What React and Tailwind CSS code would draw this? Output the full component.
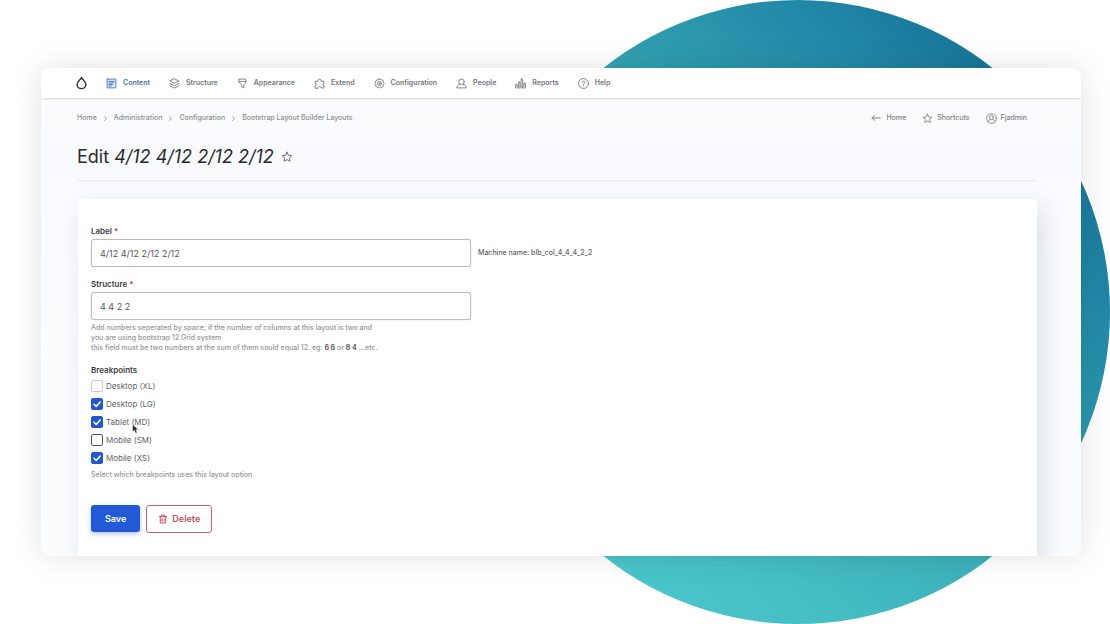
import React from "react";

const stroke = {
  fill: "none",
  stroke: "currentColor",
  strokeWidth: 1.6,
  strokeLinecap: "round",
  strokeLinejoin: "round",
};

function Icon({ children, className = "size-3" }) {
  return (
    <svg viewBox="0 0 20 20" className={`shrink-0 ${className}`} aria-hidden="true" {...stroke}>
      {children}
    </svg>
  );
}

const STAR = "M10 2l2.400 5.100 5.600.7-4.100 3.800 1.100 5.500-5-2.700-5 2.700 1.100-5.500L2 7.800l5.600-.7z";

const icons = {
  content: (
    <>
      <rect x="2" y="2" width="16" height="16" rx="0.5" fill="#dbe8f7" />
      <path d="M5.500 6.200h9M5.500 9h9M5.500 11.800h6M5.500 14.500h4" />
    </>
  ),
  structure: (
    <>
      <path d="M10 1.500l8 4-8 4-8-4z" />
      <path d="M2 10l8 4 8-4" />
      <path d="M2 14.300l8 4 8-4" />
    </>
  ),
  appearance: (
    <>
      <path d="M4 2h12v6.500L12.500 12v6l-4-2v-4L4 8.500z" />
      <path d="M4 6.500h12" />
    </>
  ),
  extend: (
    <path d="M2 18v-4.500c3.600.5 3.600-4.100 0-3.600V6h5.200C5.600.6 14.400.6 12.800 6H18v3.900c-3.600-.5-3.600 4.100 0 3.600V18h-5.300c.3-3.900-5.700-3.900-5.400 0z" />
  ),
  configuration: (
    <>
      <path d="M10 1.500l1.600 1.700 2.300-.6.9 2.200 2.400.7-.3 2.300 1.700 2.200-1.700 2.200.3 2.300-2.400.7-.9 2.200-2.300-.6L10 18.500l-1.600-1.700-2.300.6-.9-2.200-2.400-.7.3-2.300L1.400 10l1.700-2.200-.3-2.300 2.400-.7.9-2.200 2.300.6z" />
      <circle cx="10" cy="10" r="3.600" />
      <circle cx="10" cy="10" r="0.800" />
    </>
  ),
  people: (
    <>
      <circle cx="10" cy="6.800" r="5" />
      <path d="M6.800 11.500c-3 .8-5 2.800-5.300 6.500h17c-.3-3.700-2.300-5.700-5.300-6.500" />
    </>
  ),
  reports: (
    <>
      <rect x="1" y="12" width="3" height="6.500" rx="1" />
      <rect x="6" y="7.500" width="3" height="11" rx="1" />
      <rect x="11" y="2" width="3" height="16.500" rx="1" />
      <rect x="16" y="9.500" width="3" height="9" rx="1" />
    </>
  ),
  help: (
    <>
      <circle cx="10" cy="10" r="9" />
      <path d="M7.400 8c0-3.600 5.400-3.400 5.200-.2-.1 1.900-2.600 2-2.600 4.200M10 14.400v.2" />
    </>
  ),
};

const nav = [
  ["content", "Content"],
  ["structure", "Structure"],
  ["appearance", "Appearance"],
  ["extend", "Extend"],
  ["configuration", "Configuration"],
  ["people", "People"],
  ["reports", "Reports"],
  ["help", "Help"],
];

const crumbs = ["Home", "Administration", "Configuration", "Bootstrap Layout Builder Layouts"];

const breakpoints = [
  { id: "xl", label: "Desktop (XL)", box: "border-[#c9cace]" },
  { id: "lg", label: "Desktop (LG)", checked: true, box: "border-[#2158cf]" },
  { id: "md", label: "Tablet (MD)", checked: true, box: "border-[#2158cf]", pointer: true },
  { id: "sm", label: "Mobile (SM)", box: "border-[#55565b]" },
  { id: "xs", label: "Mobile (XS)", checked: true, box: "border-[#2158cf]" },
];

function Toolbar() {
  return (
    <nav
      aria-label="Administration"
      className="relative flex h-[30px] items-center gap-[19px] bg-white pl-[35px] text-[7px] font-semibold shadow-[0_1px_2px_rgba(0,0,0,0.14)]"
    >
      <a href="#" aria-label="Back to site" className="text-[#333439]">
        <svg viewBox="0 0 20 24" className="h-[14px] w-[11px]" aria-hidden="true" fill="none" stroke="currentColor" strokeWidth="2.600" strokeLinejoin="round">
          <path d="M10 2.200C8.500 5.500 2 9.500 2 14.600a8 7.600 0 0 0 16 0C18 9.500 11.500 5.500 10 2.200z" />
        </svg>
      </a>
      {nav.map(([key, label]) => (
        <a
          key={key}
          href="#"
          className={`flex items-center gap-1.5 ${key === "content" ? "text-[#3f74b4]" : "text-[#74757a]"}`}
        >
          <Icon className="size-[11px]">{icons[key]}</Icon>
          {label}
        </a>
      ))}
    </nav>
  );
}

function Field({ id, label, value, aside, children }) {
  return (
    <div>
      <label htmlFor={id} className="block text-[8px] leading-[15px] font-semibold text-[#3c3d42]">
        {label} <span className="text-[#c8324b]">*</span>
      </label>
      <div className="flex items-center gap-[7px]">
        <input
          id={id}
          type="text"
          defaultValue={value}
          className="h-7 w-full max-w-[380px] rounded-[3px] border border-[#bdbec2] bg-white px-2 text-[9px] text-[#55565b] shadow-[0_0_1px_rgba(0,0,0,0.3)] outline-none"
        />
        {aside}
      </div>
      {children}
    </div>
  );
}

export default function App() {
  return (
    <div className="relative isolate min-h-screen overflow-hidden bg-white pt-[68px] pr-[29px] pb-[68px] pl-[41px] font-['Inter',sans-serif]">
      <div className="absolute inset-y-0 right-0 -z-10 aspect-square rounded-full bg-[linear-gradient(225deg,#187799_15%,#2389a9_26%,#309fb0_42%,#3cafb9_54%,#46c0c5_75%,#4ac5c9_85%)]" />

      <div className="overflow-hidden rounded-[10px] bg-[linear-gradient(to_bottom,#fbfbfc_30px,#f8fafd_90px,#fafcfe_300px)] shadow-[0_0_32px_rgba(0,0,0,0.12)]">
        <Toolbar />

        <header className="pr-11 pl-9">
          <div className="flex h-10 items-center justify-between pr-2.5 text-[7px] font-medium text-[#8d8e93]">
            <nav aria-label="Breadcrumb" className="flex items-center gap-[7px]">
              {crumbs.map((crumb, i) => (
                <React.Fragment key={crumb}>
                  {i > 0 && (
                    <svg viewBox="0 0 6 10" className="h-[5px] w-[3px]" aria-hidden="true" {...stroke}>
                      <path d="M1 1l4 4-4 4" />
                    </svg>
                  )}
                  <a href="#">{crumb}</a>
                </React.Fragment>
              ))}
            </nav>
            <div className="flex items-center gap-4 text-[#808186]">
              <a href="#" className="flex items-center gap-[5px]">
                <Icon className="size-[10px]">
                  <path d="M18 10H2M7 5.500L2 10l5 4.500" strokeWidth="2" />
                </Icon>
                Home
              </a>
              <a href="#" className="flex items-center gap-1">
                <Icon className="size-[11px]">
                  <path d={STAR} />
                </Icon>
                Shortcuts
              </a>
              <a href="#" className="flex items-center gap-1">
                <Icon className="size-[11px]">
                  <circle cx="10" cy="10" r="8.800" />
                  <circle cx="10" cy="8" r="3.600" />
                  <path d="M4 16.200c.6-2.600 2-4 4-4.600M16 16.200c-.6-2.600-2-4-4-4.600" />
                </Icon>
                Fjadmin
              </a>
            </div>
          </div>
          <div className="flex h-11 items-center gap-[7px] border-b-2 border-[#f1f2f5] pb-1">
            <h1 className="text-[18px] leading-6 text-[#28292d]">
              Edit <em>4/12 4/12 2/12 2/12</em>
            </h1>
            <button type="button" aria-label="Add to shortcuts" className="text-[#6a6b70]">
              <Icon>
                <path d={STAR} />
              </Icon>
            </button>
          </div>
        </header>

        <main className="mt-[17px] mr-11 ml-[37px] bg-white px-[13px] pt-[25px] pb-[23px] shadow-[6px_10px_22px_rgba(45,65,85,0.14)]">
          <form onSubmit={(e) => e.preventDefault()}>
            <div className="flex flex-col gap-[10px]">
              <Field
                id="label"
                label="Label"
                value="4/12 4/12 2/12 2/12"
                aside={
                  <p className="text-[7px] font-medium whitespace-nowrap text-[#626368]">
                    Machine name: blb_col_4_4_4_2_2
                  </p>
                }
              />
              <Field id="structure" label="Structure" value="4 4 2 2">
                <p className="mt-[3px] text-[7px] leading-[10px] font-medium text-[#94959a]">
                  Add numbers seperated by space; if the number of columns at this layout is two and
                  <br />
                  you are using bootstrap 12 Grid system
                  <br />
                  this field must be two numbers at the sum of them sould equal 12. eg:{" "}
                  <b className="font-bold text-[#626368]">6 6</b> or{" "}
                  <b className="font-bold text-[#626368]">8 4</b> ...etc.
                </p>
              </Field>
              <fieldset>
                <legend className="text-[8px] leading-[14px] font-semibold text-[#3c3d42]">Breakpoints</legend>
                {breakpoints.map((b) => (
                  <div key={b.id} className="relative flex h-[18px] items-center gap-[3px] text-[8px] text-[#626368]">
                    <span className="grid">
                      <input
                        id={b.id}
                        type="checkbox"
                        defaultChecked={b.checked}
                        className={`peer col-start-1 row-start-1 size-3 appearance-none rounded-[2px] border bg-white checked:bg-[#2158cf] ${b.box}`}
                      />
                      <svg
                        viewBox="0 0 12 12"
                        className="pointer-events-none col-start-1 row-start-1 size-3 text-white opacity-0 peer-checked:opacity-100"
                        aria-hidden="true"
                        {...stroke}
                      >
                        <path d="M3 6.300l2.200 2.200L9.200 4" />
                      </svg>
                    </span>
                    <label htmlFor={b.id}>{b.label}</label>
                    {b.pointer && (
                      <svg viewBox="0 0 12 18" className="absolute top-[11px] left-[41px] h-[10px] w-[7px]" aria-hidden="true">
                        <path
                          d="M1 1v13l3-2.800 2.200 5.300 2.600-1.100-2.200-5.100H11z"
                          fill="#1c1c1e"
                          stroke="#ffffff"
                          strokeWidth="0.800"
                        />
                      </svg>
                    )}
                  </div>
                ))}
                <p className="mt-[3px] text-[7px] leading-[10px] font-medium text-[#94959a]">
                  Select which breakpoints uses this layout option
                </p>
              </fieldset>
            </div>
            <div className="mt-[25px] flex gap-1.5 text-[9px] font-semibold">
              <button
                type="submit"
                className="h-[27px] rounded-[3px] bg-[#2259d6] px-[14px] text-white shadow-[0_2px_5px_rgba(34,89,214,0.35)]"
              >
                Save
              </button>
              <button
                type="button"
                className="flex h-7 items-center gap-1 rounded-[3px] border border-[#c4626b] bg-white px-[11px] text-[#c05562]"
              >
                <Icon className="size-[10px]">
                  <path d="M3 5h14M7 4.500V2h6v2.500M4.500 5.500V18h11V5.500M8 9v5.500M12 9v5.500" strokeWidth="2" />
                </Icon>
                Delete
              </button>
            </div>
          </form>
        </main>
      </div>
    </div>
  );
}
